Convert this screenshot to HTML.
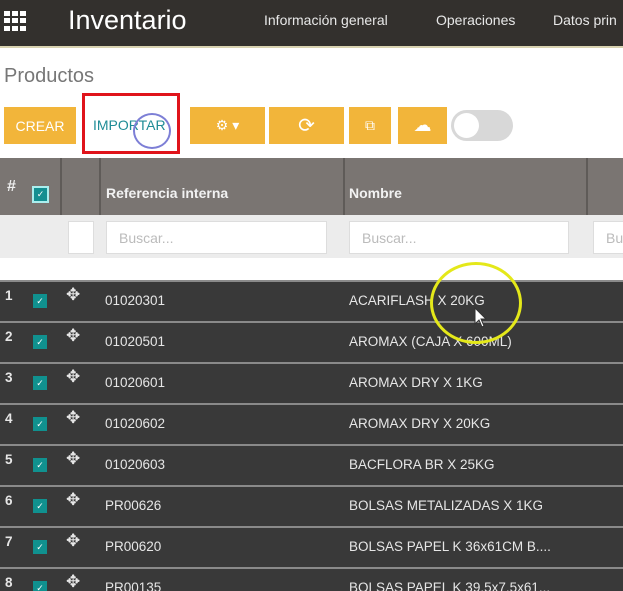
<!DOCTYPE html>
<html><head><meta charset="utf-8"><style>
*{margin:0;padding:0;box-sizing:border-box}
html,body{width:623px;height:591px;overflow:hidden}
body{background:#fff;font-family:"Liberation Sans",Arial,sans-serif;position:relative}
.nav{position:absolute;left:0;top:0;width:623px;height:48px;background:#33302d;border-bottom:2px solid #d8d2b0}
.nav .t{position:absolute;left:68px;top:5px;font-size:27px;color:#fff}
.nav .m{position:absolute;top:12px;font-size:14px;color:#e8e8e8}
.grid{position:absolute;left:4px;top:11px;width:22px;height:20px;display:grid;grid-template-columns:repeat(3,6px);gap:2px}
.grid i{background:#fff;display:block;height:5px}
.prod{position:absolute;left:4px;top:65px;font-size:20px;color:#777}
.btn{position:absolute;top:107px;height:37px;background:#f2b53a;color:#fff;font-size:14px;display:flex;align-items:center;justify-content:center}
.hdr{position:absolute;left:0;top:158px;width:623px;height:57px;background:#7a7572}
.vl{position:absolute;width:2px;background:#5f5b58}
.filt{position:absolute;left:0;top:215px;width:623px;height:43px;background:#ececec}
.inp{position:absolute;top:221px;height:33px;background:#fff;border:1px solid #ddd;color:#bbb;font-size:14px;padding:8px 12px}
.row{position:absolute;left:0;width:623px;height:39px;background:#393939;color:#e6e6e6;font-size:13.5px}
.sep{position:absolute;left:0;width:623px;height:2px;background:#8a8a8a}
.cb{position:absolute;left:33px;top:12px;width:14px;height:14px;background:#10918f;color:#fff;font-size:9px;text-align:center;line-height:14px}
.num{position:absolute;left:5px;top:6px;font-weight:bold}
.mv{position:absolute;left:66px;top:3px;font-size:17px}
.ref{position:absolute;left:105px;top:11px}
.nm{position:absolute;left:349px;top:11px}
</style></head><body>
<div class="nav">
<div class="grid"><i></i><i></i><i></i><i></i><i></i><i></i><i></i><i></i><i></i></div>
<div class="t">Inventario</div>
<div class="m" style="left:264px">Información general</div>
<div class="m" style="left:436px">Operaciones</div>
<div class="m" style="left:553px;white-space:nowrap">Datos prin</div>
</div>
<div class="prod">Productos</div>
<div class="btn" style="left:4px;width:72px">CREAR</div>
<div style="position:absolute;left:82px;top:93px;width:98px;height:61px;border:3px solid #e0141b"></div>
<div style="position:absolute;left:93px;top:117px;font-size:14px;color:#1f8c96">IMPORTAR</div>
<div style="position:absolute;left:133px;top:113px;width:38px;height:36px;border:2px solid #7d7fd6;border-radius:50%"></div>
<div class="btn" style="left:190px;width:75px">⚙ ▾</div>
<div class="btn" style="left:269px;width:75px;font-size:20px">⟳</div>
<div class="btn" style="left:349px;width:42px">⧉</div>
<div class="btn" style="left:398px;width:49px;font-size:18px">☁</div>
<div style="position:absolute;left:451px;top:110px;width:62px;height:31px;border-radius:16px;background:#d8d8d8"><div style="position:absolute;left:3px;top:3px;width:25px;height:25px;border-radius:50%;background:#fff"></div></div>
<div class="hdr">
<div style="position:absolute;left:7px;top:20px;color:#eee;font-weight:bold">#</div>
<div style="position:absolute;left:32px;top:28px;width:17px;height:17px;border:2px solid #aee;background:#148f91;color:#fff;font-size:9px;text-align:center;line-height:13px">✓</div>
<div style="position:absolute;left:106px;top:27px;color:#f2f2f2;font-weight:bold;font-size:14px">Referencia interna</div>
<div style="position:absolute;left:349px;top:27px;color:#f2f2f2;font-weight:bold;font-size:14px">Nombre</div>
</div>
<div class="vl" style="left:60px;top:158px;height:57px"></div>
<div class="vl" style="left:99px;top:158px;height:57px"></div>
<div class="vl" style="left:343px;top:158px;height:57px"></div>
<div class="vl" style="left:586px;top:158px;height:57px"></div>
<div class="filt"></div>
<div class="inp" style="left:68px;width:26px"></div>
<div class="inp" style="left:106px;width:221px">Buscar...</div>
<div class="inp" style="left:349px;width:220px">Buscar...</div>
<div class="inp" style="left:593px;width:40px">Bu</div>
<div style="position:absolute;left:0;top:258px;width:623px;height:23px;background:#fff"></div>
<div class="sep" style="top:280px"></div>
<div class="row" style="top:282px"><span class="num">1</span><span class="cb">✓</span><span class="mv">✥</span><span class="ref">01020301</span><span class="nm">ACARIFLASH X 20KG</span></div>
<div class="sep" style="top:321px"></div>
<div class="row" style="top:323px"><span class="num">2</span><span class="cb">✓</span><span class="mv">✥</span><span class="ref">01020501</span><span class="nm">AROMAX (CAJA X 600ML)</span></div>
<div class="sep" style="top:362px"></div>
<div class="row" style="top:364px"><span class="num">3</span><span class="cb">✓</span><span class="mv">✥</span><span class="ref">01020601</span><span class="nm">AROMAX DRY X 1KG</span></div>
<div class="sep" style="top:403px"></div>
<div class="row" style="top:405px"><span class="num">4</span><span class="cb">✓</span><span class="mv">✥</span><span class="ref">01020602</span><span class="nm">AROMAX DRY X 20KG</span></div>
<div class="sep" style="top:444px"></div>
<div class="row" style="top:446px"><span class="num">5</span><span class="cb">✓</span><span class="mv">✥</span><span class="ref">01020603</span><span class="nm">BACFLORA BR X 25KG</span></div>
<div class="sep" style="top:485px"></div>
<div class="row" style="top:487px"><span class="num">6</span><span class="cb">✓</span><span class="mv">✥</span><span class="ref">PR00626</span><span class="nm">BOLSAS METALIZADAS X 1KG</span></div>
<div class="sep" style="top:526px"></div>
<div class="row" style="top:528px"><span class="num">7</span><span class="cb">✓</span><span class="mv">✥</span><span class="ref">PR00620</span><span class="nm">BOLSAS PAPEL K 36x61CM B....</span></div>
<div class="sep" style="top:567px"></div>
<div class="row" style="top:569px"><span class="num">8</span><span class="cb">✓</span><span class="mv">✥</span><span class="ref">PR00135</span><span class="nm">BOLSAS PAPEL K 39.5x7.5x61...</span></div>
<div style="position:absolute;left:430px;top:262px;width:92px;height:82px;border:3px solid #e4e81a;border-radius:50%"></div>
<svg style="position:absolute;left:474px;top:307px" width="14" height="22" viewBox="0 0 14 22"><path d="M1 1 L1 17 L5 13 L8 20 L10 19 L7 12 L12 12 Z" fill="#fff" stroke="#333" stroke-width="1"/></svg>
</body></html>
